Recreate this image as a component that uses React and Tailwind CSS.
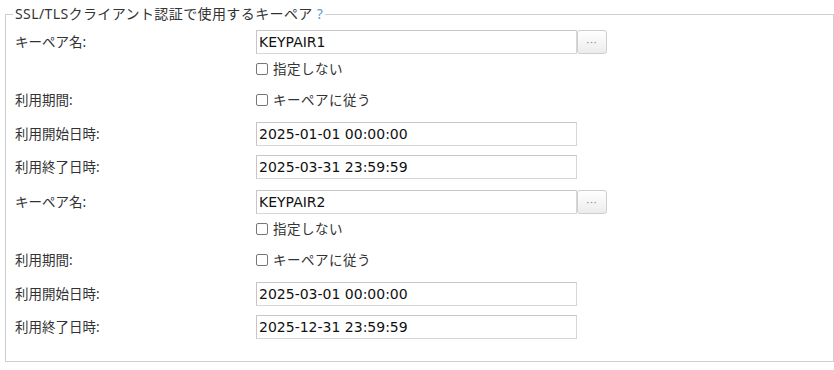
const CJK = '"Noto Sans", "Noto Sans CJK JP", sans-serif';

const blocks = [
  { keypair: 'KEYPAIR1', start: '2025-01-01 00:00:00', end: '2025-03-31 23:59:59' },
  { keypair: 'KEYPAIR2', start: '2025-03-01 00:00:00', end: '2025-12-31 23:59:59' },
];

function Label({ children }) {
  return <div className="w-[250px] shrink-0 pl-[9px] text-[13.5px] text-[#333]">{children}</div>;
}

function TextBox({ value }) {
  return (
    <div className="w-[321px] h-[24px] border border-[#d6d6d6] border-l-[#c6c6c6] border-t-[#c6c6c6] bg-white flex items-center pl-[2px] text-[14px] text-[#111] font-['DejaVu_Sans','Noto_Sans_CJK_JP',sans-serif]">
      {value}
    </div>
  );
}

function Check({ label }) {
  return (
    <div className="flex items-center gap-[5px] text-[13.5px] text-[#333]">
      <span className="w-[12px] h-[12px] border border-[#777] rounded-[2px] bg-white" />
      <span className="tracking-[0.5px]">{label}</span>
    </div>
  );
}

function Block({ b }) {
  return (
    <div className="flex flex-col">
      <div className="flex items-center h-[24px]">
        <Label>キーペア名:</Label>
        <TextBox value={b.keypair} />
        <button className="w-[30px] h-[24px] border border-[#cfcfcf] rounded-[3px] bg-gradient-to-b from-white to-[#ececec] flex items-center justify-center text-[10px] leading-none text-[#8a8a8a] tracking-[1px]">
          ···
        </button>
      </div>
      <div className="flex items-center h-[22px] mt-[4px]">
        <Label />
        <Check label="指定しない" />
      </div>
      <div className="flex items-center h-[22px] mt-[9px]">
        <Label>利用期間:</Label>
        <Check label="キーペアに従う" />
      </div>
      <div className="flex items-center h-[24px] mt-[11px]">
        <Label>利用開始日時:</Label>
        <TextBox value={b.start} />
      </div>
      <div className="flex items-center h-[24px] mt-[9px]">
        <Label>利用終了日時:</Label>
        <TextBox value={b.end} />
      </div>
    </div>
  );
}

export default function App() {
  return (
    <div className="w-[834px] h-[370px] bg-white overflow-hidden" style={{ fontFamily: CJK }}>
      <fieldset className="ml-[5px] mt-[5px] w-[829px] h-[357px] border border-[#cfcfcf] px-0 pt-0 m-0">
        <legend className="ml-[7px] px-[2px] text-[14px] tracking-[0.4px] leading-[18px] text-[#333]">
          SSL/TLSクライアント認証で使用するキーペア <span className="text-[#5b9bd5]">?</span>
        </legend>
        <div className="flex flex-col gap-[11px] pt-[7px]">
          {blocks.map(b => (
            <Block key={b.keypair} b={b} />
          ))}
        </div>
      </fieldset>
    </div>
  );
}
